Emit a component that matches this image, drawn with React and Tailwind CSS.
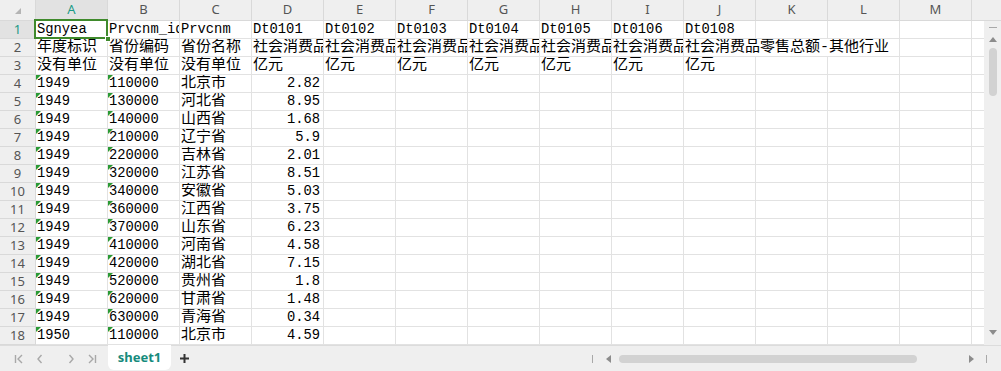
import React from 'react'

const cols = ['A', 'B', 'C', 'D', 'E', 'F', 'G', 'H', 'I', 'J', 'K', 'L', 'M']

const head = [
  ['Sgnyea', 'Prvcnm_id', 'Prvcnm', 'Dt0101', 'Dt0102', 'Dt0103', 'Dt0104', 'Dt0105', 'Dt0106', 'Dt0108', '', '', ''],
  ['年度标识', '省份编码', '省份名称', '社会消费品零售总额', '社会消费品零售总额', '社会消费品零售总额', '社会消费品零售总额', '社会消费品零售总额', '社会消费品零售总额', '社会消费品零售总额-其他行业', ''],
  ['没有单位', '没有单位', '没有单位', '亿元', '亿元', '亿元', '亿元', '亿元', '亿元', '亿元', '', '', ''],
]

const data = [
  ['1949', '110000', '北京市', '2.82'],
  ['1949', '130000', '河北省', '8.95'],
  ['1949', '140000', '山西省', '1.68'],
  ['1949', '210000', '辽宁省', '5.9'],
  ['1949', '220000', '吉林省', '2.01'],
  ['1949', '320000', '江苏省', '8.51'],
  ['1949', '340000', '安徽省', '5.03'],
  ['1949', '360000', '江西省', '3.75'],
  ['1949', '370000', '山东省', '6.23'],
  ['1949', '410000', '河南省', '4.58'],
  ['1949', '420000', '湖北省', '7.15'],
  ['1949', '520000', '贵州省', '1.8'],
  ['1949', '620000', '甘肃省', '1.48'],
  ['1949', '630000', '青海省', '0.34'],
  ['1950', '110000', '北京市', '4.59'],
]

const isCjk = (t) => /[\u4e00-\u9fff]/.test(t)

function Cell({ text = '', right, tri, span3 }) {
  const font = isCjk(text)
    ? "font-['Liberation_Mono','Noto_Sans_CJK_SC',monospace] text-[15px]"
    : "font-['Liberation_Mono',monospace] text-[13.8px]"
  return (
    <div
      className={
        'relative h-[18px] border-r border-b border-[#e2e2e2] overflow-hidden whitespace-nowrap leading-[17px] text-black ' +
        font +
        (right ? ' text-right pr-[3px]' : ' pl-[1px]') +
        (span3 ? ' col-span-3' : '')
      }
    >
      {tri && (
        <span className="absolute left-0 top-0 w-0 h-0 border-t-[5px] border-r-[5px] border-t-[#2a9a34] border-r-transparent" />
      )}
      {text}
    </div>
  )
}

function RowHead({ n, active }) {
  return (
    <div
      className={
        "h-[18px] border-r border-b border-[#d9d9d9] flex items-center justify-center font-['Noto_Sans',sans-serif] text-[13px] " +
        (active ? 'bg-[#e2e2e2] text-[#1a9a86]' : 'bg-[#efefef] text-[#555]')
      }
    >
      {n}
    </div>
  )
}

function Chevron({ d }) {
  return (
    <svg width="12" height="12" viewBox="0 0 12 12" fill="none" stroke="#a8a8a8" strokeWidth="1.4">
      <path d={d} />
    </svg>
  )
}

export default function App() {
  return (
    <div className="w-[1001px] h-[371px] bg-white flex flex-col overflow-hidden select-none">
      <div className="flex h-[345px]">
        <div className="w-[984px] grid grid-cols-[36px_repeat(13,72px)_12px] content-start">
          {/* header row */}
          <div className="h-[21px] bg-[#efefef] border-r border-b border-[#d9d9d9] relative">
            <span className="absolute left-[15px] top-[8px] w-0 h-0 border-l-[6px] border-l-transparent border-b-[6px] border-b-[#b4b4b4]" />
          </div>
          {cols.map((c) => (
            <div
              key={c}
              className={
                "h-[21px] border-r border-b border-[#d9d9d9] flex items-center justify-center font-['Noto_Sans',sans-serif] text-[13px] " +
                (c === 'A' ? 'bg-[#e2e2e2] text-[#1a9a86]' : 'bg-[#efefef] text-[#555]')
              }
            >
              {c}
            </div>
          ))}
          <div className="h-[21px] bg-[#efefef] border-b border-[#d9d9d9]" />

          {/* rows 1-3 */}
          {head.map((row, ri) => (
            <React.Fragment key={'h' + ri}>
              <RowHead n={ri + 1} active={ri === 0} />
              {row.map((t, ci) =>
                ri === 0 && ci === 0 ? (
                  <div key={ci} className="relative z-10 h-[18px] border-r border-b border-[#e2e2e2] whitespace-nowrap leading-[17px] pl-[1px] font-['Liberation_Mono',monospace] text-[13.8px]">
                    {t}
                    <span className="absolute -left-[2px] -top-[2px] w-[74px] h-[20px] border-2 border-[#3f8a2c]" />
                    <span className="absolute -right-[4px] -bottom-[4px] w-[6px] h-[6px] bg-[#3f8a2c] border border-white" />
                  </div>
                ) : (
                  <Cell key={ci} text={t} span3={ri === 1 && ci === 9} />
                )
              )}
              <div className="h-[18px] border-b border-[#e2e2e2]" />
            </React.Fragment>
          ))}

          {/* data rows */}
          {data.map((row, ri) => (
            <React.Fragment key={'d' + ri}>
              <RowHead n={ri + 4} />
              <Cell text={row[0]} tri />
              <Cell text={row[1]} tri />
              <Cell text={row[2]} />
              <Cell text={row[3]} right />
              {cols.slice(4).map((c) => (
                <Cell key={c} />
              ))}
              <div className="h-[18px] border-b border-[#e2e2e2]" />
            </React.Fragment>
          ))}
        </div>

        {/* vertical scrollbar */}
        <div className="w-[17px] flex flex-col bg-[#efefef]">
          <div className="h-[21px] border-b border-[#d9d9d9]" />
          <div className="flex-1 flex flex-col items-center">
            <div className="mt-[6px] w-[8px] h-[1px] bg-[#a8a8a8]" />
            <div className="mt-[9px] w-0 h-0 border-l-[4px] border-r-[4px] border-b-[5px] border-l-transparent border-r-transparent border-b-[#8c8c8c]" />
            <div className="mt-[6px] w-[8px] h-[48px] rounded-full bg-[#d2d2d2]" />
            <div className="flex-1" />
            <div className="mb-[10px] w-0 h-0 border-l-[4px] border-r-[4px] border-t-[5px] border-l-transparent border-r-transparent border-t-[#8c8c8c]" />
          </div>
        </div>
      </div>

      {/* bottom bar */}
      <div className="h-[26px] bg-[#efefef] border-t border-[#dcdcdc] flex items-start">
        <div className="flex items-center h-[25px] pl-[13px] gap-[9px]">
          <Chevron d="M2.5 2v8M9 2L5 6l4 4" />
          <Chevron d="M7.5 2L4 6l3.5 4" />
          <span className="ml-[10px]"><Chevron d="M4.5 2L8 6l-3.5 4" /></span>
          <Chevron d="M9.5 2v8M3 2l4 4-4 4" />
        </div>
        <div className="ml-[10px] -mt-[1px] w-[63px] h-[25px] bg-white rounded-b-[6px] flex items-center justify-center font-['Noto_Sans',sans-serif] text-[13px] font-bold text-[#168b7c]">
          sheet1
        </div>
        <div className="ml-[8px] h-[25px] flex items-center">
          <svg width="11" height="11" viewBox="0 0 11 11" stroke="#333" strokeWidth="2">
            <path d="M5.5 1v9M1 5.5h9" />
          </svg>
        </div>
        <div className="ml-[402px] h-[25px] flex items-center">
          <div className="w-[1px] h-[8px] bg-[#a8a8a8]" />
          <div className="ml-[13px] w-0 h-0 border-t-[4px] border-b-[4px] border-r-[5px] border-t-transparent border-b-transparent border-r-[#8c8c8c]" />
          <div className="ml-[8px] w-[298px] h-[8px] rounded-full bg-[#d2d2d2]" />
          <div className="ml-[52px] w-0 h-0 border-t-[4px] border-b-[4px] border-l-[5px] border-t-transparent border-b-transparent border-l-[#8c8c8c]" />
          <div className="ml-[12px] w-[1px] h-[8px] bg-[#a8a8a8]" />
        </div>
      </div>
    </div>
  )
}
